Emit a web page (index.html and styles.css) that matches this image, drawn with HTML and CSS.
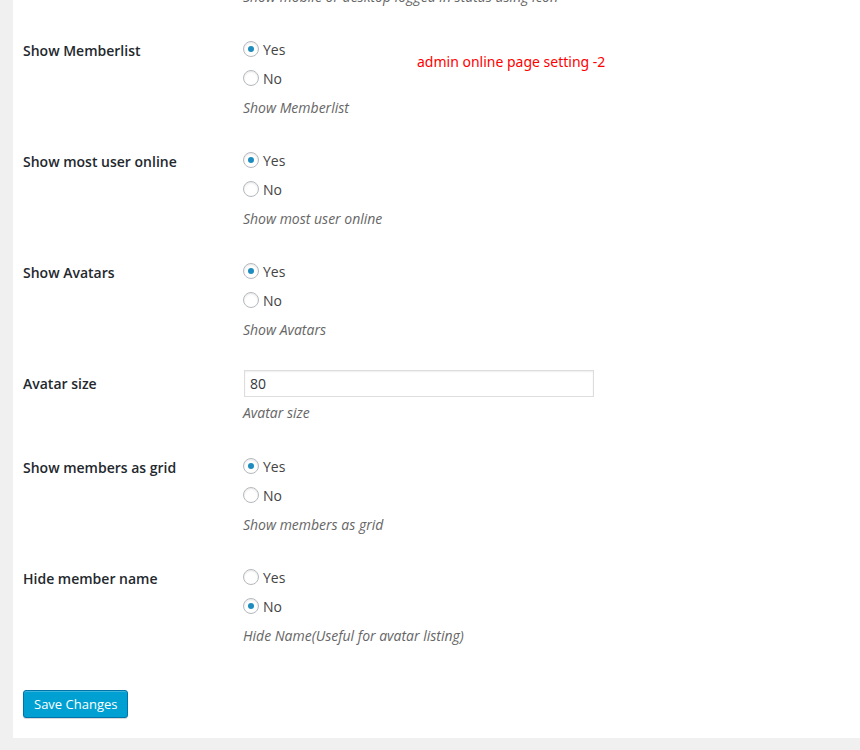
FILE: index.html
```html
<!DOCTYPE html>
<html lang="en">
<head>
<meta charset="utf-8">
<title>Online Page Settings</title>
<link rel="stylesheet" href="styles.css">
</head>
<body>
<main class="panel">
  <form>
    <div class="row row-first">
      <p class="description">Show mobile or desktop logged in status using icon</p>
    </div>
    <div class="row" role="radiogroup" aria-labelledby="memberlist">
      <div class="title" id="memberlist">Show Memberlist</div>
      <div class="field">
        <label class="option"><input type="radio" name="memberlist" checked>Yes</label>
        <label class="option"><input type="radio" name="memberlist">No</label>
        <p class="description">Show Memberlist</p>
      </div>
    </div>
    <div class="row" role="radiogroup" aria-labelledby="most">
      <div class="title" id="most">Show most user online</div>
      <div class="field">
        <label class="option"><input type="radio" name="most" checked>Yes</label>
        <label class="option"><input type="radio" name="most">No</label>
        <p class="description">Show most user online</p>
      </div>
    </div>
    <div class="row" role="radiogroup" aria-labelledby="avatars">
      <div class="title" id="avatars">Show Avatars</div>
      <div class="field">
        <label class="option"><input type="radio" name="avatars" checked>Yes</label>
        <label class="option"><input type="radio" name="avatars">No</label>
        <p class="description">Show Avatars</p>
      </div>
    </div>
    <div class="row">
      <label class="title" for="size">Avatar size</label>
      <div class="field">
        <input class="text" type="text" id="size" value="80">
        <p class="description">Avatar size</p>
      </div>
    </div>
    <div class="row" role="radiogroup" aria-labelledby="grid">
      <div class="title" id="grid">Show members as grid</div>
      <div class="field">
        <label class="option"><input type="radio" name="grid" checked>Yes</label>
        <label class="option"><input type="radio" name="grid">No</label>
        <p class="description">Show members as grid</p>
      </div>
    </div>
    <div class="row" role="radiogroup" aria-labelledby="name">
      <div class="title" id="name">Hide member name</div>
      <div class="field">
        <label class="option"><input type="radio" name="name">Yes</label>
        <label class="option"><input type="radio" name="name" checked>No</label>
        <p class="description">Hide Name(Useful for avatar listing)</p>
      </div>
    </div>
    <button class="save" type="button">Save Changes</button>
  </form>
  <div class="note">admin online page setting -2</div>
</main>
</body>
</html>
```
FILE: styles.css
```css
* {
  box-sizing: border-box;
}

body {
  margin: 0;
  overflow: hidden;
  background: #f0f0f0;
  color: #444;
  font: 14px/29px "Open Sans", sans-serif;
}

.panel {
  position: relative;
  display: flow-root;
  margin-left: 13px;
  padding: 0 10px 20px;
  background: #fff;
}

.row {
  display: grid;
  grid-template-columns: 220px 1fr;
  margin-bottom: 24px;
}

.row-first {
  margin-top: -18px;
}

.row-first .description {
  grid-column: 2;
}

.title {
  padding-top: 1px;
  color: #23282d;
  font-weight: 600;
}

.option {
  display: flex;
  align-items: center;
  gap: 4px;
  width: fit-content;
}

.option input {
  appearance: none;
  display: grid;
  place-items: center;
  width: 16px;
  height: 16px;
  margin: 0 0 2px;
  border: 1px solid #b4b9be;
  border-radius: 50%;
  background: #fff;
  box-shadow: inset 0 1px 2px rgba(0, 0, 0, 0.1);
}

.option input:checked::before {
  content: "";
  width: 6px;
  height: 6px;
  border-radius: 50%;
  background: #1e8cbe;
}

.text {
  display: block;
  width: 350px;
  max-width: 100%;
  height: 27px;
  margin: 2px 1px 1px;
  padding: 3px 5px;
  border: 1px solid #ddd;
  background: #fff;
  box-shadow: inset 0 1px 2px rgba(0, 0, 0, 0.07);
  color: #32373c;
  font: inherit;
  line-height: 19px;
}

.text + .description {
  padding-bottom: 1px;
}

.description {
  margin: 0;
  color: #666;
  font-style: italic;
}

.save {
  display: block;
  height: 28px;
  margin-top: 40px;
  padding: 0 10px;
  border: 1px solid #0073aa;
  border-radius: 3px;
  background: #00a0d2;
  box-shadow: inset 0 1px 0 rgba(120, 200, 230, 0.5), 0 1px 0 rgba(0, 0, 0, 0.15);
  color: #fff;
  font: 13px/26px "Open Sans", sans-serif;
}

.note {
  position: absolute;
  top: 47px;
  left: 404px;
  color: #f00;
  font-family: "Noto Sans", sans-serif;
  font-size: 14px;
}
```
